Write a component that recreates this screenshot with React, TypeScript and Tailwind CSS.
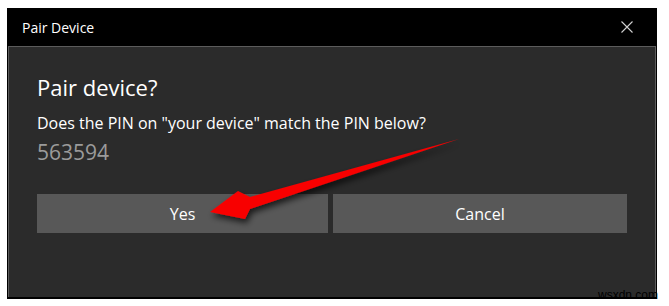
export default function App() {
  return (
    <div className="relative h-[306px] w-[669px] overflow-hidden bg-white font-['Open_Sans',sans-serif]">
      <div className="ml-[7px] mt-[8px] flex h-[291px] w-[650px] flex-col bg-black">
        <div className="flex h-[38px] items-center justify-between pl-[15px] pr-[24px]">
          <span className="text-[14px] text-white">Pair Device</span>
          <svg width="12" height="12" viewBox="0 0 12 12" className="text-[#d0d0d0]">
            <path d="M0.5 0.5 L11.5 11.5 M11.5 0.5 L0.5 11.5" stroke="currentColor" strokeWidth="1.1" />
          </svg>
        </div>
        <div className="mx-[1px] mb-[2px] flex flex-1 flex-col border border-b-0 border-[#5c5c5c] bg-[#2b2b2b] pl-[28px] pr-[28px]">
          <h1 className="mt-[25px] text-[22px] leading-[30px] text-white">Pair device?</h1>
          <p className="mt-[10px] text-[16px] leading-[22px] text-white">
            Does the PIN on "your device" match the PIN below?
          </p>
          <p className="mt-[4px] text-[21px] leading-[28px] text-[#9b9b9b]">563594</p>
          <div className="mt-[28px] flex gap-[5px]">
            <button className="h-[39px] w-[291px] bg-[#585858] text-[16px] text-white">Yes</button>
            <button className="h-[39px] w-[294px] bg-[#585858] text-[16px] text-white">Cancel</button>
          </div>
        </div>
      </div>
      <svg className="pointer-events-none absolute left-0 top-0" width="669" height="306" viewBox="0 0 669 306">
        <defs>
          <filter id="sh" x="-20%" y="-20%" width="140%" height="160%">
            <feDropShadow dx="2" dy="4" stdDeviation="3" floodColor="#000" floodOpacity="0.7" />
          </filter>
        </defs>
        <polygon
          points="459,139 250,197 238,191 210,212 245,219 250,209"
          fill="#f80000"
          filter="url(#sh)"
        />
      </svg>
      <span className="absolute left-[598px] top-[289px] text-[12px] leading-[12px] text-black font-['Liberation_Sans',sans-serif]">
        wsxdn.com
      </span>
    </div>
  );
}
